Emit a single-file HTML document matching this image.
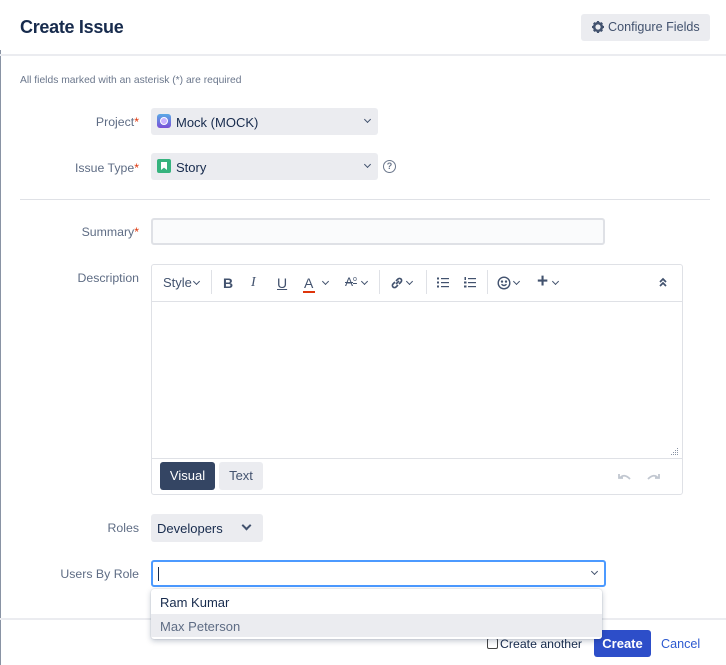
<!DOCTYPE html>
<html><head><meta charset="utf-8"><style>
*{box-sizing:border-box;margin:0;padding:0}
body{width:726px;height:665px;background:#fff;font-family:"Liberation Sans",sans-serif;color:#172b4d;position:relative;overflow:hidden}
.a{position:absolute}
.lbl{position:absolute;right:587px;font-size:12.3px;color:#5e6c84;text-align:right;white-space:nowrap}
.req{color:#de350b}
.sel{position:absolute;background:#ebecf0;border-radius:3px;font-size:13px;color:#172b4d}
.chev{position:absolute;width:6px;height:6px;border-right:1.6px solid #42526e;border-bottom:1.6px solid #42526e;transform:rotate(45deg)}
.tb{position:absolute;top:275px;font-size:13px;color:#42526e}
.sep{position:absolute;top:270px;width:1px;height:24px;background:#dfe1e6}
.sc{display:inline-block;width:5px;height:5px;border-right:1.5px solid #42526e;border-bottom:1.5px solid #42526e;transform:rotate(45deg);position:absolute}
</style></head><body>
<div class="a" style="left:0;top:50px;width:1px;height:615px;background:#8993a4"></div>
<div class="a" style="left:20px;top:17px;font-size:18px;font-weight:bold;color:#172b4d;letter-spacing:-0.3px">Create Issue</div>
<div class="a" style="left:581px;top:14px;width:129px;height:27px;background:#ebecf0;border-radius:3px;font-size:12.6px;color:#42526e;padding:6px 0 0 27px">Configure Fields</div>
<svg class="a" style="left:591px;top:20px" width="14" height="14" viewBox="0 0 14 14"><circle cx="7" cy="7" r="4" fill="none" stroke="#42526e" stroke-width="2.2"/><g stroke="#42526e" stroke-width="2.2"><line x1="7" y1="1" x2="7" y2="13"/><line x1="1" y1="7" x2="13" y2="7"/><line x1="2.8" y1="2.8" x2="11.2" y2="11.2"/><line x1="11.2" y1="2.8" x2="2.8" y2="11.2"/></g><circle cx="7" cy="7" r="2.6" fill="#ebecf0"/></svg>
<div class="a" style="left:0;top:54px;width:726px;height:2px;background:#ebecf0"></div>
<div class="a" style="left:20px;top:75px;font-size:10.3px;color:#6b778c">All fields marked with an asterisk (*) are required</div>

<div class="lbl" style="top:115px">Project<span class="req">*</span></div>
<div class="sel" style="left:151px;top:108px;width:227px;height:27px"><div class="a" style="left:6px;top:6px;width:14px;height:14px;border-radius:3px;background:linear-gradient(#5aa9e6,#7a4fd8)"><div class="a" style="left:3px;top:3px;width:8px;height:8px;border-radius:50%;background:#c9b3ff;border:1.5px solid #fff"></div></div><span class="a" style="left:25px;top:7px">Mock (MOCK)</span><div class="chev" style="left:214px;top:9px;width:5px;height:5px"></div></div>

<div class="lbl" style="top:161px">Issue Type<span class="req">*</span></div>
<div class="sel" style="left:151px;top:153px;width:227px;height:27px"><div class="a" style="left:6px;top:6px;width:14px;height:14px;border-radius:2px;background:#36b37e"><div class="a" style="left:4px;top:3px;width:6px;height:8px;background:#fff;clip-path:polygon(0 0,100% 0,100% 100%,50% 70%,0 100%)"></div></div><span class="a" style="left:25px;top:7px">Story</span><div class="chev" style="left:214px;top:9px;width:5px;height:5px"></div></div>
<div class="a" style="left:383px;top:160px;width:13px;height:13px;border:1.3px solid #6b778c;border-radius:50%;font-size:9px;color:#6b778c;text-align:center;line-height:11px;font-weight:bold">?</div>

<div class="a" style="left:20px;top:199px;width:690px;height:1px;background:#dfe1e6"></div>

<div class="lbl" style="top:225px">Summary<span class="req">*</span></div>
<div class="a" style="left:151px;top:218px;width:454px;height:27px;background:#fafbfc;border:2px solid #dfe1e6;border-radius:3px"></div>

<div class="lbl" style="top:271px">Description</div>
<div class="a" style="left:151px;top:264px;width:532px;height:231px;border:1px solid #dfe1e6;border-radius:3px"></div>
<div class="a" style="left:152px;top:301px;width:530px;height:1px;background:#dfe1e6"></div>
<div class="a" style="left:152px;top:458px;width:530px;height:1px;background:#dfe1e6"></div>
<div class="tb" style="left:163px">Style</div><span class="sc" style="left:194px;top:279px"></span>
<div class="sep" style="left:211px"></div>
<div class="tb" style="left:223px;font-weight:bold;font-size:14px">B</div>
<div class="tb" style="left:251px;font-style:italic;font-size:14px;font-family:'Liberation Serif',serif">I</div>
<div class="tb" style="left:277px;text-decoration:underline;font-size:14px">U</div>
<div class="tb" style="left:304px;font-size:14px">A</div><div class="a" style="left:303px;top:291px;width:12px;height:2px;background:#de350b"></div><span class="sc" style="left:323px;top:279px"></span>
<div class="tb" style="left:345px;font-size:12px;text-decoration:line-through">A<sup style="font-size:7px">o</sup></div><span class="sc" style="left:362px;top:279px"></span>
<div class="sep" style="left:379px"></div>
<svg class="a" style="left:390px;top:276px" width="14" height="14" viewBox="0 0 14 14" fill="none" stroke="#42526e" stroke-width="1.6"><path d="M6 8l3-3M5 6L3 8a2 2 0 0 0 3 3l2-2M9 8l2-2a2 2 0 0 0-3-3L6 5"/></svg><span class="sc" style="left:407px;top:279px"></span>
<div class="sep" style="left:426px"></div>
<svg class="a" style="left:437px;top:277px" width="12" height="11" viewBox="0 0 12 11" fill="#42526e"><rect x="0" y="0.5" width="2" height="2"/><rect x="0" y="4.5" width="2" height="2"/><rect x="0" y="8.5" width="2" height="2"/><rect x="4" y="1" width="8" height="1.2"/><rect x="4" y="5" width="8" height="1.2"/><rect x="4" y="9" width="8" height="1.2"/></svg>
<svg class="a" style="left:464px;top:277px" width="12" height="11" viewBox="0 0 12 11" fill="#42526e"><rect x="0.5" y="0" width="1.5" height="3"/><rect x="0" y="4.5" width="2.5" height="2"/><rect x="0" y="8.5" width="2.5" height="2"/><rect x="4" y="1" width="8" height="1.2"/><rect x="4" y="5" width="8" height="1.2"/><rect x="4" y="9" width="8" height="1.2"/></svg>
<div class="sep" style="left:487px"></div>
<svg class="a" style="left:497px;top:276px" width="14" height="14" viewBox="0 0 14 14" fill="none" stroke="#42526e" stroke-width="1.4"><circle cx="7" cy="7" r="5.8"/><path d="M4.5 8.3q2.5 2.4 5 0"/><circle cx="5" cy="5.6" r=".5" fill="#42526e"/><circle cx="9" cy="5.6" r=".5" fill="#42526e"/></svg><span class="sc" style="left:514px;top:279px"></span>
<div class="tb" style="left:537px;top:271px;font-size:19px;font-weight:bold">+</div><span class="sc" style="left:553px;top:279px"></span>
<svg class="a" style="left:658px;top:277px" width="10" height="10" viewBox="0 0 10 10" fill="none" stroke="#42526e" stroke-width="1.7"><path d="M2 5l3-3 3 3M2 9l3-3 3 3"/></svg>
<svg class="a" style="left:670px;top:447px" width="9" height="9" viewBox="0 0 9 9" fill="#8993a4"><rect x="7" y="1" width="1" height="1"/><rect x="5" y="3" width="1" height="1"/><rect x="7" y="3" width="1" height="1"/><rect x="3" y="5" width="1" height="1"/><rect x="5" y="5" width="1" height="1"/><rect x="7" y="5" width="1" height="1"/><rect x="1" y="7" width="1" height="1"/><rect x="3" y="7" width="1" height="1"/><rect x="5" y="7" width="1" height="1"/><rect x="7" y="7" width="1" height="1"/></svg>
<div class="a" style="left:160px;top:462px;width:55px;height:28px;background:#344563;border-radius:3px;color:#fff;font-size:13px;text-align:center;line-height:28px">Visual</div>
<div class="a" style="left:219px;top:462px;width:44px;height:28px;background:#ebecf0;border-radius:3px;color:#42526e;font-size:13px;text-align:center;line-height:28px">Text</div>
<svg class="a" style="left:617px;top:471px" width="44" height="10" viewBox="0 0 44 10" fill="none" stroke="#c1c7d0" stroke-width="1.8"><path d="M3 7q4-5 10 1M2 3v4h4"/><path d="M41 7q-4-5-10 1M42 3v4h-4"/></svg>

<div class="lbl" style="top:521px">Roles</div>
<div class="sel" style="left:151px;top:514px;width:112px;height:28px"><span class="a" style="left:6px;top:7px">Developers</span><div class="chev" style="left:92px;top:8px;width:7px;height:7px;border-width:2px"></div></div>

<div class="lbl" style="top:567px">Users By Role</div>
<div class="a" style="left:151px;top:560px;width:455px;height:27px;border:2px solid #4c9aff;border-radius:3px;background:#fff"><div class="a" style="left:5px;top:5px;width:1px;height:14px;background:#172b4d"></div><div class="chev" style="left:439px;top:7px;width:5px;height:5px"></div></div>

<div class="a" style="left:0;top:618px;width:726px;height:2px;background:#ebecf0"></div>
<div class="a" style="left:487px;top:638px;width:11px;height:11px;border:1px solid #444;border-radius:2px;background:#fff"></div>
<div class="a" style="left:500px;top:637px;font-size:12.3px;color:#172b4d">Create another</div>
<div class="a" style="left:594px;top:630px;width:57px;height:27px;background:#2d4ec9;border-radius:3px;color:#fff;font-size:13px;font-weight:bold;text-align:center;line-height:27px">Create</div>
<div class="a" style="left:661px;top:637px;font-size:12.6px;color:#2d5ad0">Cancel</div>

<div class="a" style="left:151px;top:589px;width:451px;height:50px;background:#fff;border-radius:3px;box-shadow:0 2px 6px rgba(9,30,66,.25),0 0 1px rgba(9,30,66,.3)">
<div class="a" style="left:0;top:25px;width:451px;height:23px;background:#ebecf0"></div>
<div class="a" style="left:9px;top:6px;font-size:13px;color:#172b4d">Ram Kumar</div>
<div class="a" style="left:9px;top:30px;font-size:13px;color:#5e6c84">Max Peterson</div>
</div>
</body></html>
